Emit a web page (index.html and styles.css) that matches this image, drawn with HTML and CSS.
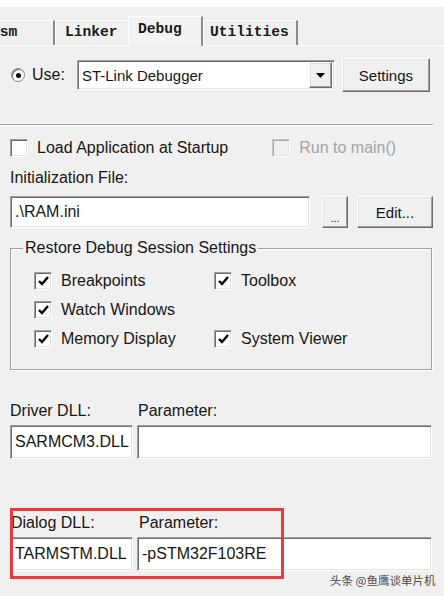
FILE: index.html
```html
<!DOCTYPE html>
<html lang="en">
<head>
    <meta charset="UTF-8">
    <meta name="viewport" content="width=device-width, initial-scale=1.0">
    <title>Options - Debug</title>
    <link rel="stylesheet" href="styles.css">
</head>
<body>
<div class="strip"></div>

<!-- Onglets -->
<div class="tabs">
    <div class="tab first"><span class="cut">Asm</span></div>
    <div class="tab linker">Linker</div>
    <div class="tab active">Debug</div>
    <div class="tab utilities">Utilities</div>
</div>

<div class="panel">
    <div class="use-row">
        <span class="radio"><span class="dot"></span></span>
        <span class="use-label">Use:</span>
        <div class="combo sunken">
            <span class="combo-text">ST-Link Debugger</span>
            <span class="combo-btn raised">
                <svg width="9" height="5" viewBox="0 0 9 5"><path d="M0 0 L9 0 L4.5 5 Z" fill="#000"/></svg>
            </span>
        </div>
        <button class="btn raised settings">Settings</button>
    </div>

    <div class="sep"></div>

    <div class="load-row">
        <label class="check"><span class="box sunken"></span>Load Application at Startup</label>
        <label class="check disabled"><span class="box sunken"></span>Run to main()</label>
    </div>

    <div class="label init-label">Initialization File:</div>
    <div class="init-row">
        <div class="field sunken init-field">.\RAM.ini</div>
        <button class="btn raised dots">...</button>
        <button class="btn raised edit">Edit...</button>
    </div>

    <fieldset class="group">
        <legend>Restore Debug Session Settings</legend>
        <div class="group-grid">
            <label class="check"><span class="box sunken on"><svg width="11" height="10" viewBox="0 0 11 10"><path d="M1 5 L4 8 L10 1" fill="none" stroke="#000" stroke-width="2.4"/></svg></span>Breakpoints</label>
            <label class="check"><span class="box sunken on"><svg width="11" height="10" viewBox="0 0 11 10"><path d="M1 5 L4 8 L10 1" fill="none" stroke="#000" stroke-width="2.4"/></svg></span>Toolbox</label>
            <label class="check"><span class="box sunken on"><svg width="11" height="10" viewBox="0 0 11 10"><path d="M1 5 L4 8 L10 1" fill="none" stroke="#000" stroke-width="2.4"/></svg></span>Watch Windows</label>
            <span></span>
            <label class="check"><span class="box sunken on"><svg width="11" height="10" viewBox="0 0 11 10"><path d="M1 5 L4 8 L10 1" fill="none" stroke="#000" stroke-width="2.4"/></svg></span>Memory Display</label>
            <label class="check"><span class="box sunken on"><svg width="11" height="10" viewBox="0 0 11 10"><path d="M1 5 L4 8 L10 1" fill="none" stroke="#000" stroke-width="2.4"/></svg></span>System Viewer</label>
        </div>
    </fieldset>

    <div class="dll-labels driver-labels">
        <span class="label">Driver DLL:</span>
        <span class="label">Parameter:</span>
    </div>
    <div class="dll-row">
        <div class="field sunken">SARMCM3.DLL</div>
        <div class="field sunken"></div>
    </div>

    <div class="dll-labels dialog-labels">
        <span class="label">Dialog DLL:</span>
        <span class="label">Parameter:</span>
    </div>
    <div class="dll-row">
        <div class="field sunken">TARMSTM.DLL</div>
        <div class="field sunken">-pSTM32F103RE</div>
    </div>
</div>

<!-- cadre rouge + filigrane par-dessus -->
<div class="highlight"></div>
<div class="watermark">头条 @鱼鹰谈单片机</div>
</body>
</html>
```

FILE: styles.css
```css
body {
    margin: 0;
    width: 444px;
    height: 596px;
    overflow: hidden;
    position: relative;
    background-color: #f0f0f0;
    font-family: "Liberation Sans", Arial, sans-serif;
    font-size: 16px;
    color: #161616;
}

.strip {
    height: 7px;
    background-color: #fff;
}

/* Onglets */
.tabs {
    height: 38px;
    display: flex;
    align-items: flex-end;
    border-bottom: 1px solid #fff;
    font-family: "Liberation Mono", "Courier New", monospace;
    font-size: 14.6px;
    font-weight: bold;
    color: #1a1a1a;
}
.tab {
    box-sizing: border-box;
    height: 25px;
    line-height: 23px;
    padding-left: 9px;
    border-top: 1px solid #fff;
    border-left: 1px solid #fff;
    border-right: 2px solid #8a8a8a;
    background-color: #f0f0f0;
    white-space: nowrap;
    overflow: hidden;
}
.tab.first {
    width: 55px;
    padding-left: 0;
    border-left: none;
}
.tab.first .cut {
    display: inline-block;
    margin-left: -9px;
}
.tab.linker {
    width: 73px;
    border-right: none;
}
.tab.active {
    width: 75px;
    height: 30px;
    line-height: 24px;
    margin-bottom: -1px;
    background-color: #f3f3f3;
}
.tab.utilities {
    width: 95px;
    padding-left: 6px;
}

.panel {
    padding-left: 10px;
}

/* Bordures 3D */
.sunken {
    border: 1px solid;
    border-color: #a0a0a0 #fff #fff #a0a0a0;
    box-shadow: inset 1px 1px 0 #6e6e6e, inset -1px -1px 0 #e3e3e3;
    background-color: #fff;
}
.raised {
    border: 1px solid;
    border-color: #fff #6e6e6e #6e6e6e #fff;
    box-shadow: inset -1px -1px 0 #a0a0a0, inset 1px 1px 0 #e3e3e3;
    background-color: #f0f0f0;
}

.btn {
    box-sizing: border-box;
    font-family: "Liberation Sans", Arial, sans-serif;
    font-size: 15px;
    color: #161616;
    padding: 0;
    margin: 0;
}

/* Ligne Use */
.use-row {
    margin-top: 12px;
    height: 34px;
    display: flex;
    align-items: center;
}
.radio {
    box-sizing: border-box;
    width: 14px;
    height: 14px;
    margin-left: 1px;
    border-radius: 50%;
    border: 1px solid #8a8a8a;
    background-color: #fff;
    box-shadow: inset 1px 1px 0 #6e6e6e;
    display: flex;
    align-items: center;
    justify-content: center;
}
.dot {
    width: 5px;
    height: 5px;
    border-radius: 50%;
    background-color: #000;
}
.use-label {
    margin-left: 7px;
}
.combo {
    box-sizing: border-box;
    width: 258px;
    height: 30px;
    margin-left: 12px;
    display: flex;
    align-items: center;
    justify-content: space-between;
    font-size: 15px;
}
.combo-text {
    padding-left: 4px;
}
.combo-btn {
    box-sizing: border-box;
    width: 23px;
    height: 26px;
    margin-right: 2px;
    display: flex;
    align-items: center;
    justify-content: center;
}
.settings {
    width: 88px;
    height: 34px;
    margin-left: 7px;
}

.sep {
    margin-top: 32px;
    margin-left: -10px;
    width: 433px;
    height: 1px;
    background-color: #a0a0a0;
    border-bottom: 1px solid #fff;
}

/* Cases à cocher */
.check {
    display: flex;
    align-items: center;
    white-space: nowrap;
}
.box {
    box-sizing: border-box;
    width: 18px;
    height: 18px;
    margin-right: 9px;
    display: flex;
    align-items: center;
    justify-content: center;
}
.check.disabled {
    color: #a3a3a3;
}
.check.disabled .box {
    background-color: #f0f0f0;
    border-color: #c8c8c8 #fff #fff #c8c8c8;
    box-shadow: inset 1px 1px 0 #a8a8a8, inset -1px -1px 0 #e3e3e3;
}

.load-row {
    margin-top: 13px;
    height: 18px;
    display: flex;
    gap: 44px;
}

.label {
    line-height: 18px;
}
.init-label {
    display: block;
    margin-top: 12px;
}
.init-row {
    margin-top: 9px;
    display: flex;
    height: 32px;
}
.field {
    box-sizing: border-box;
    height: 100%;
    padding-left: 4px;
    display: flex;
    align-items: center;
    white-space: nowrap;
    overflow: hidden;
}
.init-field {
    width: 300px;
}
.dots {
    width: 26px;
    margin-left: 12px;
    font-size: 11px;
    padding-top: 12px;
}
.edit {
    width: 76px;
    margin-left: 9px;
}

/* Groupe */
.group {
    margin: 11px 0 0 0;
    width: 422px;
    box-sizing: border-box;
    padding: 0;
    border: 1px solid #a0a0a0;
    box-shadow: 1px 1px 0 #fff, inset 1px 1px 0 #fff;
}
.group legend {
    margin-left: 12px;
    padding: 0 2px;
    line-height: 18px;
}
.group-grid {
    display: grid;
    grid-template-columns: 180px 1fr;
    grid-auto-rows: 28px;
    row-gap: 1px;
    padding: 10px 0 16px 23px;
    align-items: center;
}

/* DLL */
.dll-labels {
    display: grid;
    grid-template-columns: 123px 295px;
    column-gap: 5px;
}
.driver-labels {
    margin-top: 32px;
}
.dialog-labels {
    margin-top: 55px;
    padding-left: 1px;
}
.dll-row {
    margin-top: 5px;
    height: 34px;
    display: grid;
    grid-template-columns: 123px 295px;
    column-gap: 4px;
}

/* Cadre rouge et filigrane */
.highlight {
    position: absolute;
    left: 10px;
    top: 508px;
    width: 274px;
    height: 71px;
    box-sizing: border-box;
    border: 3px solid #ea3a3d;
}
.watermark {
    position: absolute;
    left: 330px;
    top: 572px;
    font-family: "Noto Sans CJK SC", sans-serif;
    font-size: 11.5px;
    color: #4a4a4a;
    white-space: nowrap;
}
```
